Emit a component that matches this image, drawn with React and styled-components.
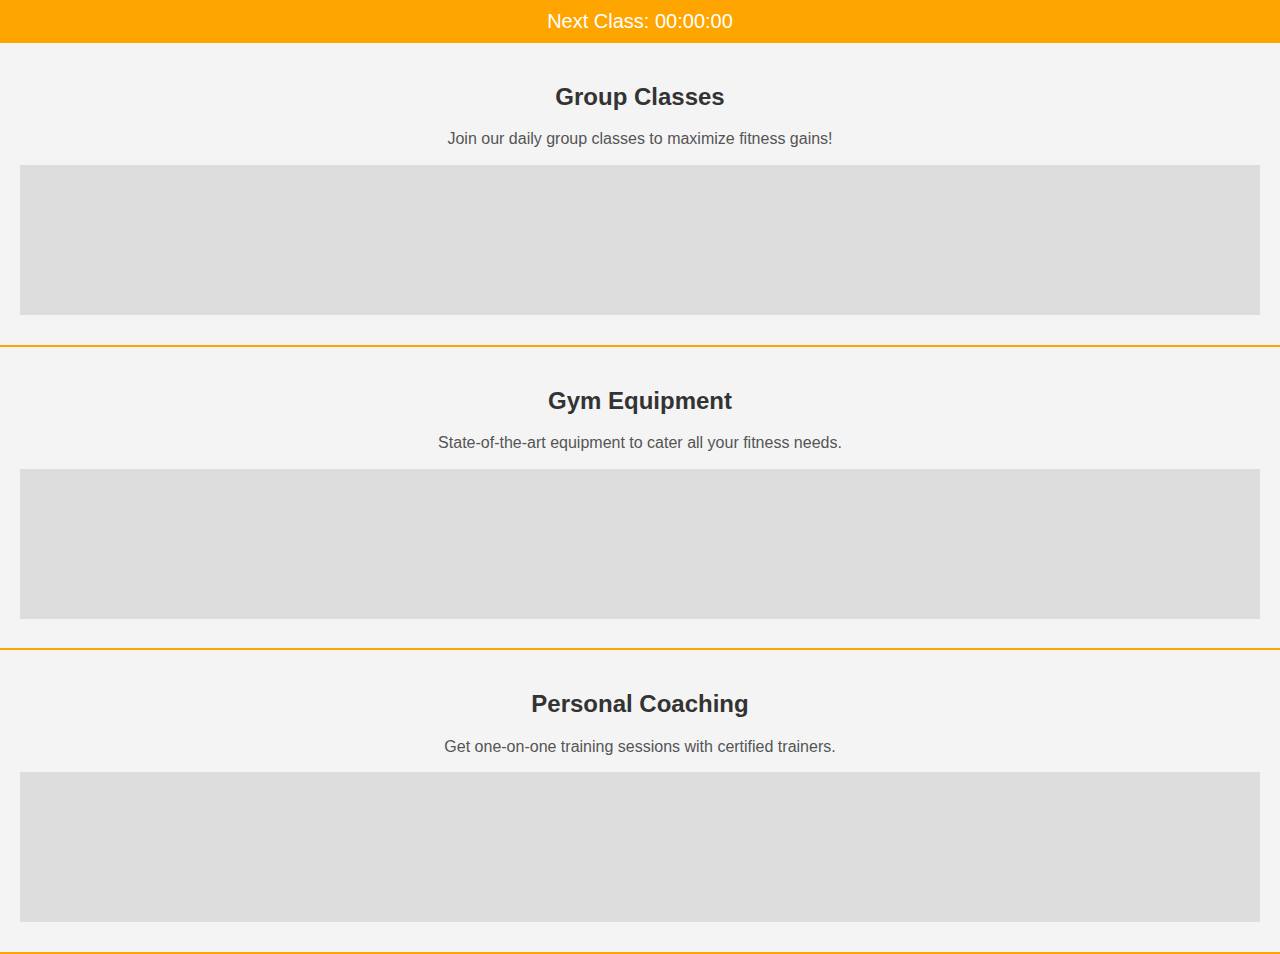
import React from "react";
import styled, { createGlobalStyle } from "styled-components";

const GlobalStyle = createGlobalStyle`
  html, body {
    margin: 0;
    padding: 0;
    background: #f4f4f4;
    font-family: "Liberation Sans", Arial, sans-serif;
  }
`;

const TopBar = styled.header`
  background: #ffa500;
  color: #fff;
  text-align: center;
  font-size: 20px;
  padding: 10px 0;
  line-height: 23px;
`;

const Section = styled.section`
  padding: 20px 20px 29.9px;
  border-bottom: 2px solid #ffa500;
  text-align: center;
`;

const Title = styled.h2`
  margin: 19.92px 0;
  font-size: 24px;
  line-height: 27.6px;
  font-weight: bold;
  color: #333;
`;

const Text = styled.p`
  margin: 16px 0;
  font-size: 16px;
  line-height: 18.4px;
  color: #555;
`;

const Placeholder = styled.div`
  height: 150px;
  background: #ddd;
`;

const sections = [
  { title: "Group Classes", text: "Join our daily group classes to maximize fitness gains!" },
  { title: "Gym Equipment", text: "State-of-the-art equipment to cater all your fitness needs." },
  { title: "Personal Coaching", text: "Get one-on-one training sessions with certified trainers." },
];

export default function App() {
  return (
    <>
      <GlobalStyle />
      <TopBar>Next Class: 00:00:00</TopBar>
      {sections.map((s) => (
        <Section key={s.title}>
          <Title>{s.title}</Title>
          <Text>{s.text}</Text>
          <Placeholder />
        </Section>
      ))}
    </>
  );
}
